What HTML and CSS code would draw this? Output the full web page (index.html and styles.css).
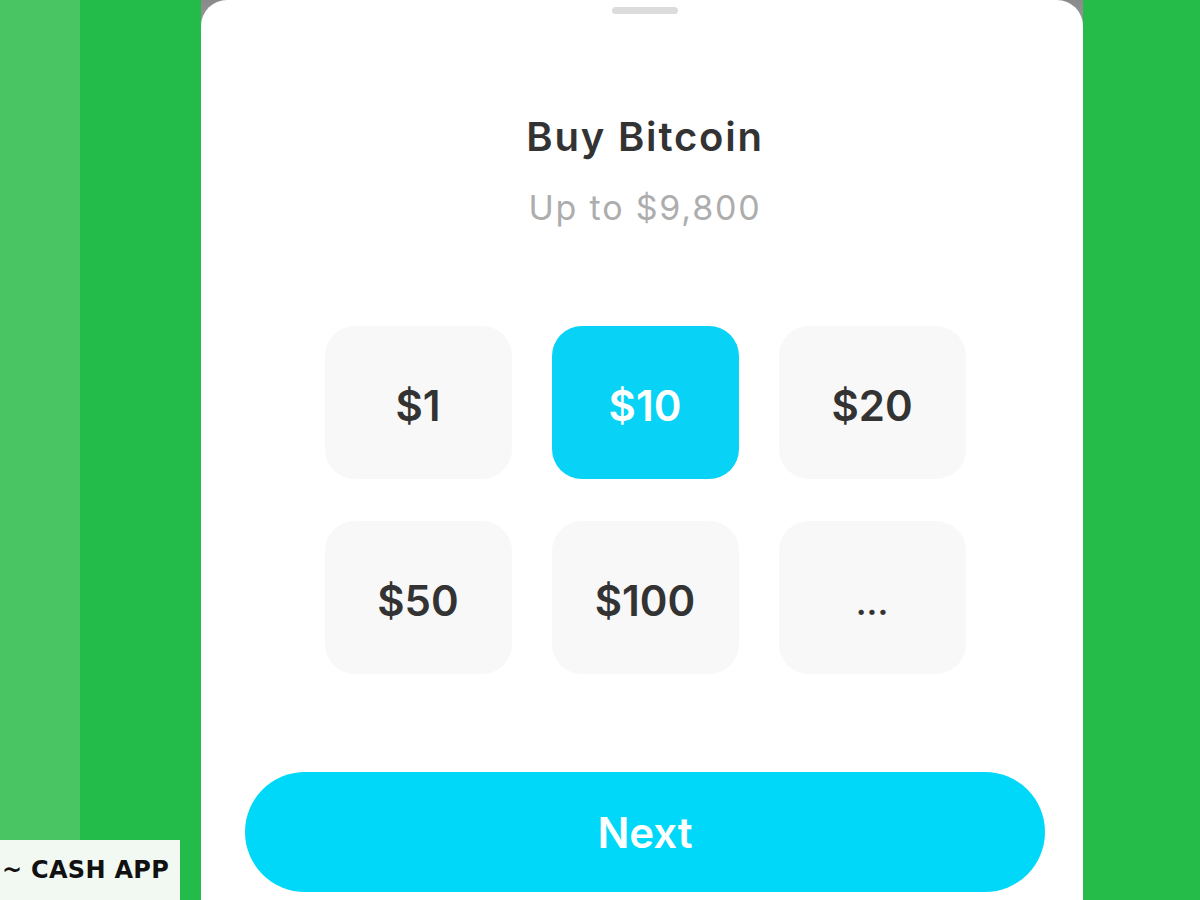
FILE: index.html
```html
<!DOCTYPE html>
<html lang="en">
<head>
    <meta charset="UTF-8">
    <meta name="viewport" content="width=device-width, initial-scale=1.0">
    <title>Buy Bitcoin</title>
    <link rel="stylesheet" href="styles.css">
</head>
<body>
    <div class="stripe stripe-light"></div>
    <div class="stripe stripe-left"></div>

    <!-- bottom sheet over the dimmed screen -->
    <div class="backdrop">
        <div class="sheet">
            <div class="handle"></div>

            <div class="sheet-header">
                <h1>Buy Bitcoin</h1>
                <p>Up to $9,800</p>
            </div>

            <div class="amounts">
                <button class="amount">$1</button>
                <button class="amount selected">$10</button>
                <button class="amount">$20</button>
                <button class="amount">$50</button>
                <button class="amount">$100</button>
                <button class="amount more">...</button>
            </div>

            <button class="next-btn">Next</button>
        </div>
    </div>

    <div class="stripe stripe-right"></div>

    <div class="tag">~ CASH APP</div>
</body>
</html>
```

FILE: styles.css
```css
html, body {
    margin: 0;
    height: 100%;
    overflow: hidden;
}
body {
    display: flex;
    font-family: Inter, "Noto Sans", sans-serif;
    background-color: #25bc4a;
}
.stripe {
    flex-shrink: 0;
    height: 100%;
}
.stripe-light {
    width: 80px;
    background-color: #49c564;
}
.stripe-left {
    width: 121px;
    background-color: #23bb4a;
}
.stripe-right {
    flex: 1;
    background-color: #25bc4a;
}
.backdrop {
    width: 882px;
    flex-shrink: 0;
    background: linear-gradient(#8a8a8a, #9a9a9a 30px, #fff 30px);
}
.sheet {
    height: 100%;
    background-color: #fff;
    border-radius: 26px 26px 0 0;
    display: flex;
    flex-direction: column;
    align-items: center;
    padding-left: 6px;
    box-sizing: border-box;
}
.handle {
    width: 66px;
    height: 7px;
    margin-top: 7px;
    border-radius: 4px;
    background-color: #dcdcdc;
}
.sheet-header {
    text-align: center;
    margin-top: 98px;
}
.sheet-header h1 {
    margin: 0;
    font-size: 40px;
    font-weight: 600;
    color: #333;
    letter-spacing: 1.8px;
}
.sheet-header p {
    margin: 26px 0 0;
    font-size: 34px;
    color: #adadad;
    letter-spacing: 1.8px;
}
.amounts {
    display: grid;
    grid-template-columns: repeat(3, 187px);
    grid-auto-rows: 153px;
    column-gap: 40px;
    row-gap: 42px;
    margin-top: 98px;
}
.amount {
    border: none;
    border-radius: 30px;
    background-color: #f8f8f8;
    font-family: inherit;
    font-size: 42px;
    font-weight: 600;
    color: #333;
    padding: 5px 0 0;
}
.amount.selected {
    background-color: #08d3f6;
    color: #fff;
}
.amount.more {
    font-size: 34px;
    padding-top: 10px;
}
.next-btn {
    width: 800px;
    height: 120px;
    margin-top: 98px;
    border: none;
    border-radius: 60px;
    background-color: #00d8f9;
    color: #fff;
    font-family: inherit;
    font-size: 42px;
    font-weight: 600;
}
/* watermark in the corner */
.tag {
    position: absolute;
    left: 0;
    bottom: 0;
    width: 180px;
    height: 60px;
    box-sizing: border-box;
    padding: 16px 0 0 2px;
    background-color: #f2f9f2;
    font-family: "DejaVu Sans", sans-serif;
    font-weight: bold;
    font-size: 24px;
    color: #111;
    white-space: nowrap;
    letter-spacing: 0.3px;
}
```
